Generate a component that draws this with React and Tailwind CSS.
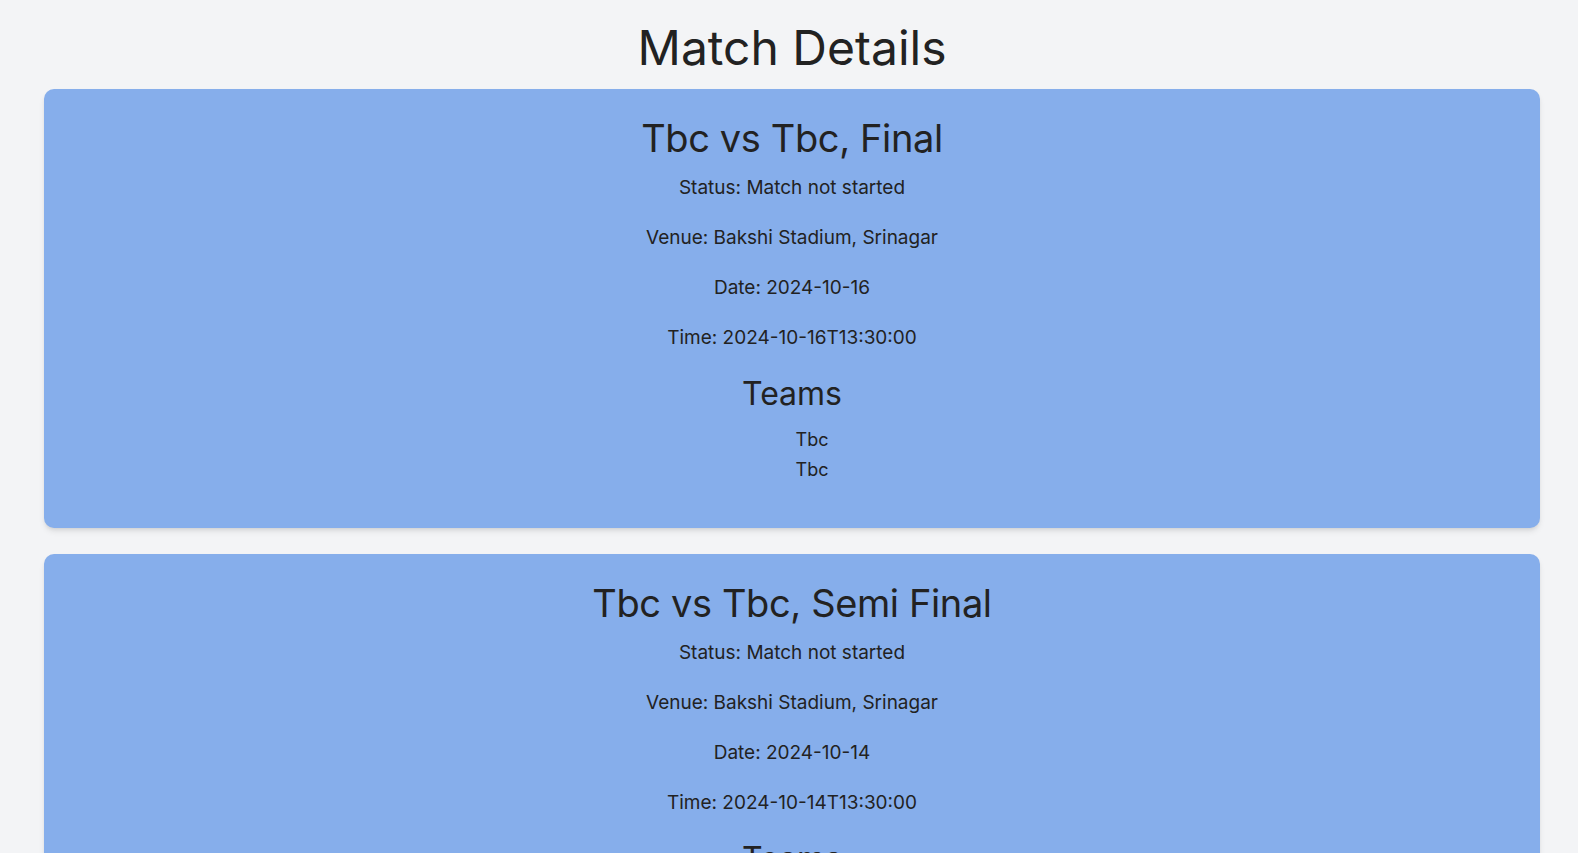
const matches = [
  {
    title: 'Tbc vs Tbc, Final',
    status: 'Match not started',
    venue: 'Bakshi Stadium, Srinagar',
    date: '2024-10-16',
    time: '2024-10-16T13:30:00',
    teams: ['Tbc', 'Tbc'],
  },
  {
    title: 'Tbc vs Tbc, Semi Final',
    status: 'Match not started',
    venue: 'Bakshi Stadium, Srinagar',
    date: '2024-10-14',
    time: '2024-10-14T13:30:00',
    teams: ['Tbc', 'Tbc'],
  },
];

const MatchCard = ({ match }) => {
  return (
    <div className="bg-[#86aeeb] rounded-[10px] shadow-md pt-[25px] pb-[43px] mb-[26px] text-center">
      <h2 className="text-[38px] leading-[48px] tracking-[-0.01em]">{match.title}</h2>
      <p className="mt-[10px] text-[19px] leading-8">Status: {match.status}</p>
      <p className="mt-[18px] text-[19px] leading-8">Venue: {match.venue}</p>
      <p className="mt-[18px] text-[19px] leading-8">Date: {match.date}</p>
      <p className="mt-[18px] text-[19px] leading-8">Time: {match.time}</p>
      <h3 className="mt-[22px] text-[32px] leading-9">Teams</h3>
      <ul className="mt-[13px] pl-10 text-lg leading-[30px]">
        {match.teams.map((t, i) => (
          <li key={i}>{t}</li>
        ))}
      </ul>
    </div>
  );
};

export default function App() {
  return (
    <div className="min-h-screen bg-[#f3f4f6] text-[#222] font-['Inter',sans-serif] pl-[44px] pr-[38px] pt-6">
      <h1 className="text-5xl leading-[48px] text-center mb-[17px]">Match Details</h1>
      {matches.map((m, i) => (
        <MatchCard key={i} match={m} />
      ))}
    </div>
  );
}
